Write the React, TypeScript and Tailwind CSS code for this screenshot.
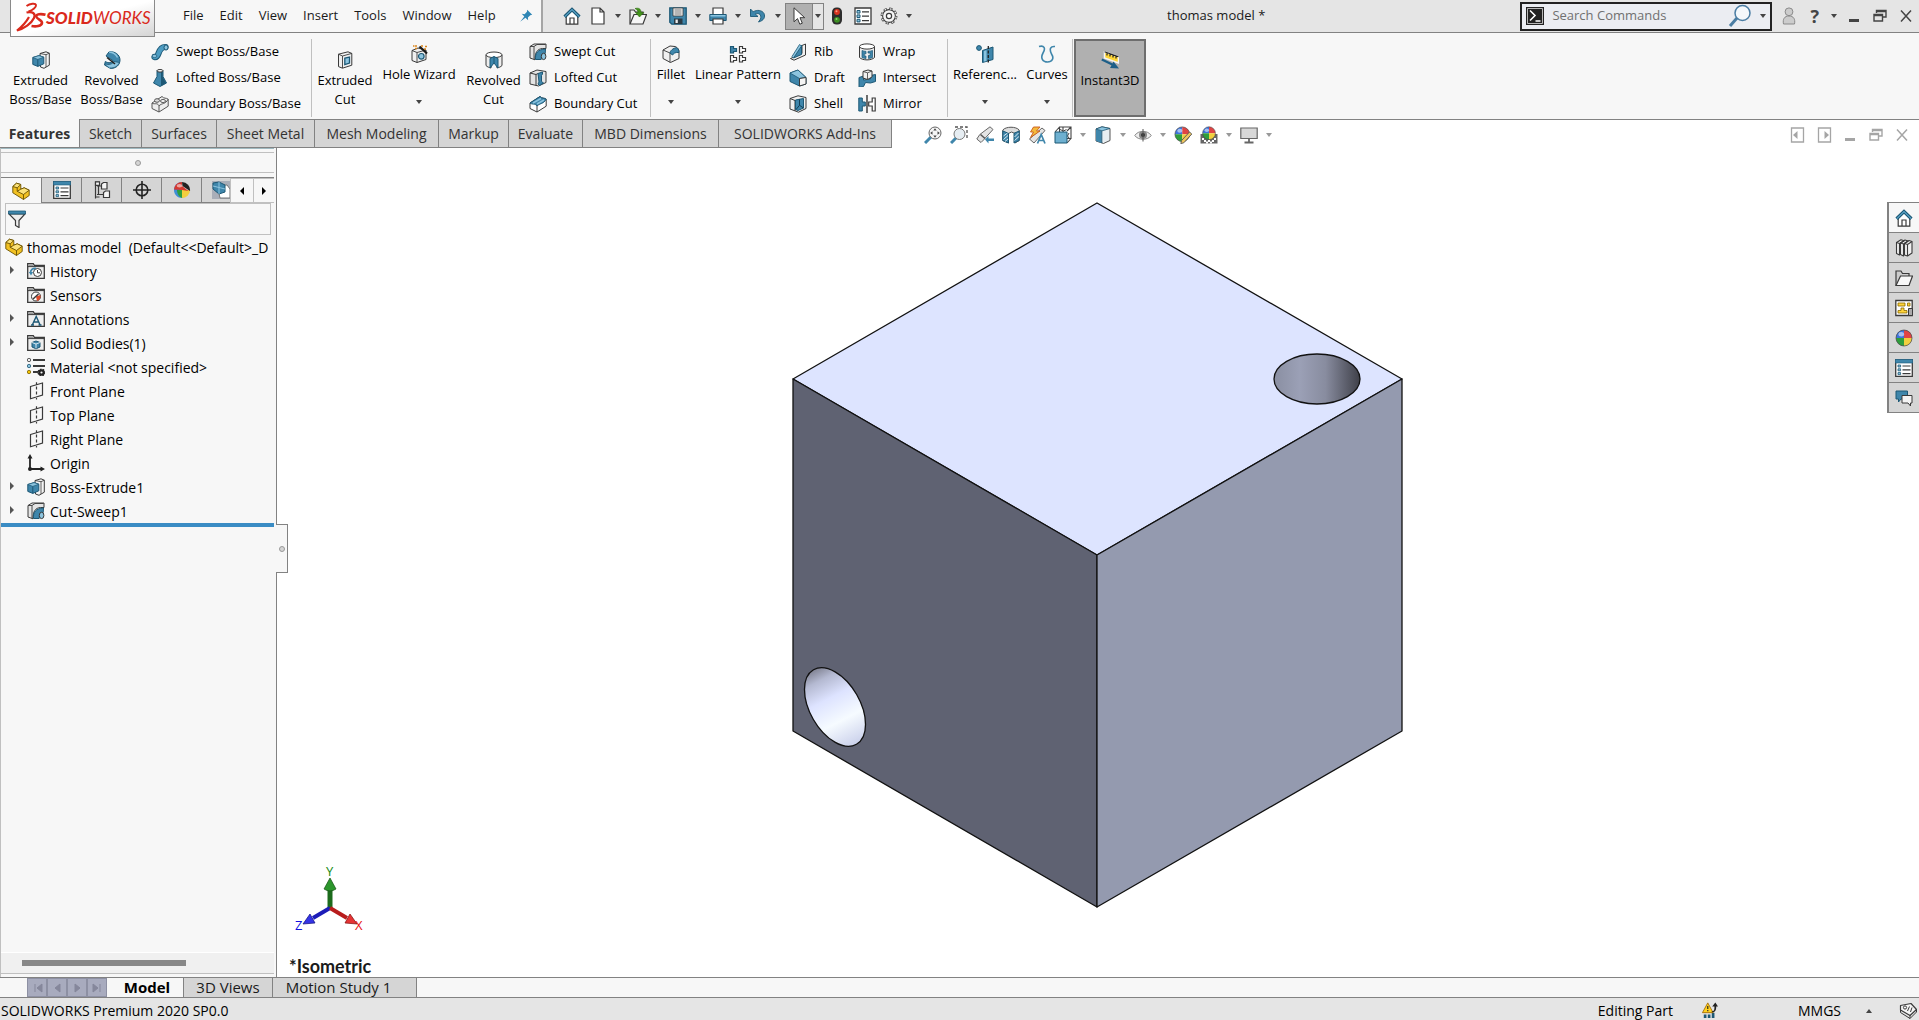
import { ReactNode, useState } from "react";

const K = "#3a3a3a";
const B = "#3f86ab";
const L = "#8cc4df";
const D = "#1d5875";
const G = "#e4e4e4";

const folder = (
  <>
    <path d="M.7 16.3V1.7h5.6l1.2 1.8h9.8v12.8z" fill="#eee" stroke={K} strokeWidth="1.3" />
    <path d="M.7 4.6h16.6" stroke={K} strokeWidth="1" />
    <path d="M1.4 2.4h4.4l1 1.6H1.4z" fill="#999" />
  </>
);

const plane = <path d="M3.5 4.5 15.5 1v12l-12 3.8zM9.5.2v2M9.5 4.5v3M9.5 9.5v3M9.5 14.5v3" fill="none" stroke={K} strokeWidth="1.2" />;

const extrude = (
  <>
    <path d="M8 2.5 14 .8l3.3 1.4v12L12 17.3 8.5 16z" fill="#f4f4f4" stroke={K} />
    <path d="M14 3.5v12.5M8 2.5l6 1.2 3.3-1.5" fill="none" stroke={K} strokeWidth=".8" />
    <path d="M.8 6.5 7 4.6l4.8 1.6v6.6l-6 2.6-5-2z" fill={B} stroke={D} />
    <path d="M.8 6.5 7 4.6l4.8 1.6-6 2.2z" fill={L} stroke={D} strokeWidth=".7" />
    <path d="M5.8 8.4v7" stroke={D} />
  </>
);

const sweptCut = (
  <>
    <path d="M1 3.5 5 1h12v4.5h-3.6C8.5 6 6 9 6 16.8L1 15z" fill={G} stroke={K} />
    <path d="M1 3.5h4v12.7M5 3.5 8 1.5h8.5" fill="none" stroke={K} strokeWidth=".9" />
    <path d="M6.5 16.5C6 10 8.5 6.5 16.5 6l-.3 4.6c-3 .3-4 2.4-4 5.9z" fill={B} stroke={D} />
    <ellipse cx="14.6" cy="13.4" rx="2.3" ry="3.2" fill={L} stroke={K} />
  </>
);

const ball = (
  <>
    <path d="M9 9V1a8 8 0 0 0-8 8z" fill="#3d74dd" />
    <path d="M9 9h8a8 8 0 0 0-8-8z" fill="#e04444" />
    <path d="M9 9H1a8 8 0 0 0 8 8z" fill="#2f9e3c" />
    <path d="M9 9v8a8 8 0 0 0 8-8z" fill="#f2cf3e" />
    <ellipse cx="6.3" cy="5.2" rx="2.8" ry="2.2" fill="#fff" opacity=".55" />
    <circle cx="9" cy="9" r="8" fill="none" stroke="#444" strokeWidth=".7" />
  </>
);

// yellow step-shaped block
const part = (
  <g stroke="#6b5200" strokeWidth=".9" strokeLinejoin="round">
    <path d="M.8 4.500 4.500 1.200 8.800 2.500v4.700l3.400-1.400 5 2.400v5.300l-5.700 4L.8 10.800z" fill="#f2c122" />
    <path d="M.8 4.500 4.500 1.200 8.800 2.500 5.200 5.800zM5.200 9.300l3.600-2.100 3.400-1.400 5 2.400-5.700 4.300z" fill="#fbe27a" />
    <path d="M5.200 5.800v3.500M11.500 12.500v5" fill="none" />
  </g>
);

const house = (
  <>
    <path d="M3.2 8.5v8.700h11.600V8.500L9 3z" fill="#fff" stroke={K} strokeWidth="1.2" />
    <path d="M7 17v-6h4v6" fill="none" stroke={K} strokeWidth="1.2" />
    <path d="M1.6 9.800 9 2.600l7.400 7.200" fill="none" stroke={D} strokeWidth="3.4" />
    <path d="M1.800 9.600 9 2.600l7.200 7" fill="none" stroke="#5aa5c9" strokeWidth="1.2" />
  </>
);

const list = (
  <>
    <path d="M1 1h16v16H1z" fill="#fff" stroke={K} strokeWidth="1.3" />
    <path d="M3 3.500h3v2.600H3zM3 7.900h3v2.600H3zM3 12.300h3v2.600H3z" fill={L} stroke={D} />
    <path d="M8 4.800h7M8 9.200h7M8 13.600h7" stroke={K} strokeWidth="1.2" />
  </>
);

const properties = (
  <>
    <path d="M.7.700h16.600v16.600H.7z" fill="#fff" stroke={K} strokeWidth="1.3" />
    <path d="M.2.200h17.600v3.800H.2z" fill={B} stroke={D} strokeWidth=".6" />
    <path d="M3 6h2.600v2H3zM3 9.800h2.600v2H3zM3 13.600h2.600v2H3z" fill={L} stroke={D} strokeWidth=".8" />
    <path d="M7.500 7h8M7.500 10.800h8M7.500 14.600h8" stroke={K} strokeWidth="1.2" />
  </>
);

const restore = <path d="M5.500 6V3.500H15V10h-3M3 7.500h8.500V14H3zM3 8.500h8.500M5.500 4.500H15" fill="none" stroke="currentColor" strokeWidth="1.4" />;

const icons: Record<string, ReactNode> = {
  home: house,
  newDoc: <path d="M3 1h8l4 4v12H3zM11 1v4h4" fill="#fff" stroke={K} strokeWidth="1.2" />,
  open: (
    <>
      <path d="M1 16.500V3h4l1.500 2H14v3" fill="#eee" stroke={K} strokeWidth="1.2" />
      <path d="m1 17 4-9.500h12.500L14 17z" fill="#f6f6f6" stroke={K} strokeWidth="1.2" />
      <path d="M6 1.500c4-1 6 .5 6 4h2.700L10.500 10 6.500 5.500H9c0-2-1-3-3-4z" fill="#43941b" stroke="#2a6a0c" strokeWidth=".6" />
    </>
  ),
  save: (
    <>
      <path d="M.8.800h16.400v16.400H2.800l-2-2z" fill={B} stroke={D} strokeWidth="1.3" />
      <path d="M4 1h10v8H4z" fill="#f4f4f4" stroke={K} strokeWidth=".8" />
      <path d="M5.500 3h7M5.500 5h7M5.500 7h7" stroke="#777" />
      <path d="M5 11.500h8.500V17H5z" fill="#2b3b45" />
      <path d="M6.500 12.500h2.300V16H6.500z" fill="#eee" />
    </>
  ),
  print: (
    <>
      <path d="M4 8V1h10v7" fill="#fff" stroke={K} strokeWidth="1.2" />
      <path d="M.8 7.500h16.400v6H.8z" fill={B} stroke={D} />
      <path d="M1.500 8h15v1.500h-15z" fill={L} />
      <path d="M4 12h10v5H4z" fill="#fff" stroke={K} strokeWidth="1.2" />
    </>
  ),
  undo: <path d="M1.500 2v7.500H9L6.300 7c3.500-1.500 6.500.5 5.200 5L9.500 15c5.500-1.500 7-5 5.500-8.500C13 3 8 2.500 4.200 4.800z" fill={B} stroke={D} strokeWidth=".9" />,
  cursor: <path d="M4 .8v14l3.500-3.200 2.300 5.600 2.500-1-2.300-5.500h4.700z" fill="#fff" stroke={K} />,
  traffic: (
    <>
      <rect x="4" y=".5" width="10" height="17" rx="4.5" fill="#2d2d2d" />
      <circle cx="9" cy="5" r="2.9" fill="#d8331f" />
      <circle cx="9" cy="12.8" r="2.9" fill="#3d8f23" />
      <circle cx="8.5" cy="4.3" r="1" fill="#ff9c86" />
      <circle cx="8.5" cy="12" r="1" fill="#8fd870" />
    </>
  ),
  list,
  gear: (
    <>
      <circle cx="9" cy="9" r="7.2" fill="none" stroke={K} strokeWidth="2.4" strokeDasharray="3.2 2.455" />
      <circle cx="9" cy="9" r="6.4" fill="#f4f4f4" stroke={K} strokeWidth="1.1" />
      <circle cx="9" cy="9" r="7.2" fill="none" stroke="#f4f4f4" strokeWidth="1.2" strokeDasharray="1.800 3.855" strokeDashoffset="-.7" />
      <circle cx="9" cy="9" r="2.6" fill="#fff" stroke={K} strokeWidth="1.2" />
    </>
  ),
  pin: <path d="m10.500 1 6.500 6.500-2.500.4-3 3 .2 3.600-3.400-3.100L1.500 16.500l5.300-6.800L3.500 6.200l3.700.4 3-3z" fill="#2f86b5" />,
  terminal: (
    <>
      <path d="M0 0h18v18H0z" fill="#222" />
      <path d="M1.500 1.500h15v15h-15z" fill="none" stroke="#ddd" strokeWidth=".8" />
      <path d="m4 3.500 5 5-5 5M9.500 14h5" fill="none" stroke="#fff" strokeWidth="1.6" />
    </>
  ),
  user: (
    <g fill="#ccc" stroke="#8a8a8a">
      <path d="M3.500 17c-1-5 1-8 5.500-8s6.500 3 5.500 8z" />
      <circle cx="9" cy="4.8" r="3.9" />
    </g>
  ),
  minimize: <path d="M4 12h10v3H4z" fill="currentColor" />,
  restore,
  close: <path d="m4 3.500 10 11M14 3.500l-10 11" stroke="currentColor" strokeWidth="1.5" />,
  paneLeft: (
    <>
      <path d="M2.500 2h12v14h-12z" fill="none" stroke="currentColor" strokeWidth="1.3" />
      <path d="M8.500 5v8L4 9z" fill="currentColor" />
    </>
  ),
  paneRight: (
    <>
      <path d="M3.500 2h12v14h-12z" fill="none" stroke="currentColor" strokeWidth="1.3" />
      <path d="M9.500 5v8L14 9z" fill="currentColor" />
    </>
  ),
  extrude,
  revolve: (
    <>
      <path d="M6 .8c6-.8 11 3 11 8.200s-4.500 9-10 8.200L1.500 14l.8-3.500c3.500 2 6.500 1.500 7.500-1L3 5z" fill={B} stroke={D} />
      <path d="M6 1c4 .2 7 2 8.500 5.500" stroke={L} strokeWidth="1.5" fill="none" />
      <path d="M7 17c4.500.3 8-2 9.500-5.500L11 10.500c-2 3-5 3.500-9 2.500" fill={L} stroke={D} strokeWidth=".8" />
      <path d="m4 6.500 8 6.500" stroke="#222" strokeWidth="1.6" />
    </>
  ),
  swept: (
    <>
      <path d="M3.500 14C9 15.500 6 3.500 14.500 4" fill="none" stroke={D} strokeWidth="6.2" strokeLinecap="round" />
      <path d="M3.500 14C9 15.500 6 3.500 14.500 4" fill="none" stroke="#4d9cc2" strokeWidth="4.3" strokeLinecap="round" />
      <ellipse cx="15" cy="4.5" rx="2" ry="2.6" fill={L} stroke={D} />
      <ellipse cx="3.5" cy="13" rx="2.4" ry="1.6" fill={L} stroke={D} strokeWidth=".7" />
    </>
  ),
  loft: (
    <>
      <path d="M6 1.500h6v6l3.500 6.500L9 17.500 2.500 14 6 7.500z" fill={B} stroke={D} />
      <path d="M10 3h1.700v5l3.300 6-5 3z" fill={D} />
      <ellipse cx="9" cy="1.8" rx="3" ry="1.3" fill="#fff" stroke={K} />
    </>
  ),
  boundary: (
    <g stroke="#555" strokeWidth="1">
      <path d="M1 8 11 1.500c2 2.500 4 1 6.200 2.700v7L8 17 1 13.500z" fill="#eee" />
      <path d="M1 8c2.500 2 5-1 7 2.800V17M8 10.800c3-3 6-1 9.200-6.600" fill="none" />
      <ellipse cx="6" cy="5.5" rx="2.5" ry="1.8" fill="#ddd" />
      <ellipse cx="12" cy="6" rx="2.5" ry="1.5" fill="#fff" />
    </g>
  ),
  extrudeCut: (
    <>
      <path d="M2.500 3.200 12 .800l3.800 1.600v11.800L6.500 17.200l-4-1.600z" fill="#f0f0f0" stroke={K} />
      <path d="M2.500 3.200 6.500 5l9.300-2.600M6.500 5v12" fill="none" stroke={K} strokeWidth=".9" />
      <path d="M8.800 7.200 13.500 6v6l-4.700 1.600z" fill={L} stroke={D} strokeWidth="1.3" />
    </>
  ),
  hole: (
    <>
      <path d="M2 5.500 8 3l8 2v9.500L7 17.500l-5-2z" fill="#f0f0f0" stroke={K} />
      <path d="M2 5.500 7 7.500l9-2.500M7 7.500v10" fill="none" stroke={K} strokeWidth=".9" />
      <circle cx="11.3" cy="11.3" r="2.8" fill={L} stroke={D} strokeWidth="1.2" />
      <path d="m9.500 1.500 7.500 7" stroke="#1a1a1a" strokeWidth="2.2" />
      <path d="M3 1h1.500M6 0v2M12 0v2M15 1.500h2M5 3.500h2M14 4h2" stroke="#d9861f" strokeWidth="1.5" />
    </>
  ),
  revolveCut: (
    <>
      <path d="M1 4v10.500c1.500 1.500 3 2 5 2.500V8l3-3 3 3v9c2-.5 3.500-1 5-2.500V4z" fill="#eee" stroke={K} />
      <ellipse cx="9" cy="3.8" rx="8" ry="2.8" fill="#fff" stroke={K} />
      <path d="m9 5.500-4 2V17l4-5 4 5V7.500z" fill={B} stroke={D} />
      <path d="M9 5.500V12" stroke={D} />
    </>
  ),
  sweptCut,
  loftCut: (
    <>
      <path d="M1 4 8 1l9 1.500v11L9.500 17 1 15z" fill={G} stroke={K} />
      <path d="M1 4l6 1.500V16.500M7 5.500 9 4.500" fill="none" stroke={K} />
      <path d="M9 4.500 13.500 3v2l-1 1.500v6l2 1.500-4 2.500L9 15l1-2z" fill={B} stroke={D} />
    </>
  ),
  boundaryCut: (
    <>
      <path d="M1 8 11 1.500c2 2.500 4 1 6.200 2.700v7L8 17 1 13.500z" fill="#fff" stroke={K} />
      <path d="M1 8 11 1.500c2 2.500 4 1 6.200 2.700C14 9.500 11 8 8 11 6 8 3.500 10 1 8z" fill={B} stroke={D} />
      <path d="m4 8 8-4.500M8 9l7-4" stroke={L} strokeWidth="1.5" />
      <path d="M8 11v6" stroke={K} />
    </>
  ),
  fillet: (
    <>
      <path d="M1 5 8 1l5 .5c3 1 4 3 4 6v6L8.500 17.500 1 13.500z" fill="#f0f0f0" stroke={K} />
      <path d="m1 5 7 3v9.500" fill="none" stroke={K} strokeWidth=".9" />
      <path d="M8 8c0-2 3-5 6.500-5.300 2 1 2.500 3 2.500 4.800C13 7 11.500 8.500 10.500 10z" fill={B} stroke={D} />
    </>
  ),
  linear: (
    <g fill="#fff" stroke={K} strokeWidth="1.2">
      <path d="M1.500 1.500h3v2h3v3h-3v1.500h-3z" fill={B} stroke={D} />
      <path d="M10.500 1.500h3v2h3v3h-3v1.500h-3z" />
      <path d="M1.500 10.500h3v2h3v3h-3V17h-3zM10.500 10.500h3v2h3v3h-3V17h-3z" />
    </g>
  ),
  rib: (
    <>
      <path d="M13 2.500 16.500 1v11L5 17.200 1.500 15.500 13 10.500z" fill="#f0f0f0" stroke={K} />
      <path d="M12.500 2v9.500L4.500 15z" fill={B} stroke={D} />
      <path d="M10.500 1.500 3 13.500l1.500 1.500 8-12z" fill={L} stroke={D} strokeWidth=".8" />
    </>
  ),
  draft: (
    <>
      <path d="M1 4 9 1l8 7.500v6.500L10.500 17 1 12.500z" fill={B} stroke={D} />
      <path d="m1 4 9.500 5.500L17 8.500 9 1z" fill={L} stroke={D} strokeWidth=".8" />
      <path d="m10.500 9.500 6.500-1v6.500l-6.500 2z" fill="#f4f4f4" stroke={K} />
    </>
  ),
  shell: (
    <>
      <path d="M1 3.500 9 .8l8 1.700v11L9.500 17.200 1 14z" fill="#f0f0f0" stroke={K} />
      <path d="m1 3.500 5 2V16" fill="none" stroke={K} />
      <path d="M6.500 5 14.500 3.500v9.500L9 15.500l-2.500-1z" fill={B} stroke={D} />
      <path d="M10.500 4.300v6l4 2.700M10.500 10.300 7 14.500" fill="none" stroke="#123f56" />
    </>
  ),
  wrap: (
    <>
      <path d="M1.500 3.500v11c3 3.200 12 3.200 15 0v-11z" fill="#eee" stroke={K} />
      <ellipse cx="9" cy="3.5" rx="7.5" ry="2.6" fill="#fff" stroke={K} />
      <path d="M4 7.500c1.500.6 2.500.8 4 .9v2.400H6.300V13H8v2.500c-1.500 0-3-.3-4-.9zM10 8.400c1.500-.1 3-.3 4.500-.9v7.100c-1.500.6-2.500.8-4 .9v-3h1.700V10H10z" fill={B} stroke={D} strokeWidth=".7" />
    </>
  ),
  intersect: (
    <>
      <path d="M1 8.500 5.500 7v4l7-1V6.500l5-1v7l-5 1.500-5-.5-2 4-4.500 1z" fill={B} stroke={D} />
      <path d="m5 2.500 5-1.500 4 1v6L9.500 10.500 5 9z" fill="#f0f0f0" stroke={K} />
      <path d="m5 2.500 4.500 1.300L14 2M9.500 3.800v6.500" fill="none" stroke={K} strokeWidth=".8" />
    </>
  ),
  mirror: (
    <>
      <path d="M.8 3h3.500v4h3v4h-3v5H.8z" fill={B} stroke={D} />
      <path d="M17.200 3h-3v4h-3.500v4h3.500v5h3z" fill="#fff" stroke={K} strokeWidth="1.2" />
      <path d="M9 0v18" stroke="#222" strokeWidth="1.3" />
    </>
  ),
  reference: (
    <>
      <path d="M6.500 5.500 17 2v12.500L6.500 17.500z" fill={B} stroke={D} />
      <path d="m8 6 2.500-.8V16L8 16.500z" fill={L} />
      <path d="M12.300 1v17" stroke="#222" strokeDasharray="3 1.5" strokeWidth="1.3" />
      <circle cx="3" cy="3" r="2.4" fill={B} stroke={D} />
    </>
  ),
  curves: <path d="M1 1.500c5-1.500 7 1.500 4 6.500C2 13.500 5 17 9.500 17s7-3.500 4-8C11 4 12.500 1 17 1.500" fill="none" stroke={B} strokeWidth="1.6" />,
  instant: (
    <>
      <path d="m3.500.8 14 5V12l-14-5z" fill="#ffd637" stroke="#f5f5f5" strokeWidth="1.5" />
      <path d="m3.500.8 14 5M6 2v2.500M9 3v2.500M12 4v2.500M15 5v2.500" stroke="#222" fill="none" strokeWidth="1.2" />
      <path d="m.8 8.500 10.500 5" stroke="#1d5f88" strokeWidth="2.2" />
      <path d="m12.500 10.500 5.500 7-9-.5z" fill="#1d5f88" />
    </>
  ),
  zoomFit: (
    <>
      <path d="m1 17 6-6" stroke={B} strokeWidth="3" />
      <circle cx="11" cy="7" r="6" fill="#f6f6f6" stroke="#666" />
      <path d="M11 2.200 9.300 4.500h3.400zM11 11.800 9.300 9.500h3.400zM6.200 7l2.300-1.700v3.400zM15.800 7l-2.300-1.700v3.400z" fill="#444" />
    </>
  ),
  zoomArea: (
    <>
      <path d="M5 1h12v13" fill="none" stroke="#555" strokeWidth="1.3" strokeDasharray="3 2" />
      <path d="m1 17 5-5" stroke={B} strokeWidth="3" />
      <circle cx="9.5" cy="8" r="5.5" fill="#e6edf2" stroke="#777" />
    </>
  ),
  prevView: (
    <>
      <path d="M14 .8 17 3.500 7.500 14 5 16.500.8 13l3-4.500z" fill={G} stroke="#666" />
      <path d="m4.500 8.500 4.500 4" stroke="#555" strokeWidth="1.5" />
      <path d="M9 13.500 12.500 10v2.500H18v2.500h-5.500v2.500z" fill={B} />
    </>
  ),
  section: (
    <>
      <path d="M.8 4C4 .3 14 .3 17.200 4v10.500L13 17V7.500L9.500 6 6.500 7.500V17L.8 14.500z" fill="#ddd" stroke="#555" />
      <path d="m.8 5 5.700 2.300V17L.8 14.500zM12 7.300 17.200 5v9.500L12 17z" fill={B} stroke={D} />
      <path d="m1.500 10 4-3M1.500 13.500l4.500-4M3 15.500l3-2.500M12.500 11l4-4M12.500 14.500l4.500-4" stroke="#fff" strokeWidth=".8" />
    </>
  ),
  dynamicView: (
    <>
      <path d="m14 2 3 2.500L6 17l-4.500-4z" fill={G} stroke="#666" />
      <path d="M5.500 1H12L8.500 5H12L2.500 11.500l3-5.500H2.500z" fill="#f4ba3c" stroke="#c7591c" strokeWidth=".9" />
      <path d="m9.500 17.500 3.700-9 3.800 9M11 14.500h4.500" fill="none" stroke={B} strokeWidth="1.7" />
    </>
  ),
  viewOrient: (
    <>
      <path d="M5.500 6V1H17v11.500h-4M9 6V1M13 5l4-4M13 17l4-4.500M1 6l4.500-5" fill="none" stroke="#444" strokeWidth="1.1" />
      <path d="M12.500 3.500 9.500 5 6 3.500M15 7l-1.500 3 1.500 2" fill="none" stroke="#444" />
      <path d="M1 6h12v11H1z" fill="#6eb0d0" stroke={D} />
    </>
  ),
  display: (
    <>
      <path d="M2 3 8 .8 16 2.500v12L9.500 17.500 2 15z" fill="#e8eef1" stroke="#555" />
      <path d="m2 3 5.500 1.700v12.200L2 15z" fill={B} />
      <path d="m2 3 6-2.200 8 1.700-8 2.300z" fill={L} stroke={D} strokeWidth=".8" />
      <path d="M7.800 5v12" stroke={D} />
    </>
  ),
  eye: (
    <>
      <path d="M.8 9.500C4 4 14 4 17.200 9.500 14 14.500 4 14.500.8 9.500z" fill="#eee" stroke="#888" />
      <circle cx="9" cy="9" r="4" fill="#8a8a8a" />
      <circle cx="9" cy="9" r="2" fill="#333" />
      <path d="M9 3v12.500" stroke="#555" />
    </>
  ),
  appearance: (
    <>
      <g transform="scale(.92)">{ball}</g>
      <path d="m15.500 6 2.300 2-8 8.800-3 .8.700-3z" fill="#f0c65d" stroke="#555" strokeWidth=".9" />
    </>
  ),
  scene: (
    <>
      <path d="M.5 8h17v9.500H.5z" fill="#666" />
      <path d="M2 12h2v2H2zM4 14h2v2H4zM8 14h2v2H8zM12 14h2v2h-2zM14 12h2v2h-2zM6 15.500h2v2H6zM10 15.500h2v2h-2z" fill="#fff" />
      <g transform="translate(1.800) scale(.8)">{ball}</g>
    </>
  ),
  monitor: (
    <>
      <path d="M.8 2h16.400v10.500H.8z" fill="#d8d8d8" stroke="#666" strokeWidth="1.2" />
      <path d="M9 12.500v3.500M4.500 16.500h9" stroke="#666" strokeWidth="1.8" />
    </>
  ),
  part,
  properties,
  config: (
    <>
      <path d="M2.500.5v17M2.500 1h4M2.500 16h4M4 5h5" stroke={K} strokeWidth="1.2" />
      <path d="M2.500.8h4v3.500h-4zM8.500 3l2-1.500H14V8H8.500zM10.500 11.500l2-1.500H16.500v6.500h-6z" fill="#f6f6f6" stroke={K} strokeWidth="1.2" />
      <path d="M4 13.500h6M5.500 5v8" stroke={K} strokeWidth="1.2" />
    </>
  ),
  target: (
    <g fill="none" stroke="#222" strokeWidth="1.6">
      <circle cx="9" cy="9" r="5.8" />
      <path d="M9 0v18M0 9h18" />
    </g>
  ),
  ball,
  ballDark: (
    <>
      <path d="M9 9V1a8 8 0 0 0-8 8z" fill="#3d74dd" />
      <path d="M9 1v8L1 8.500C1.500 4 5 1 9 1z" fill="#d63a2f" />
      <path d="M1 9h8v8C4.500 17 1 13.500 1 9z" fill="#3f8fd6" />
      <path d="M4 9h7l-1 8C6.500 17 4 13 4 9z" fill="#2f9e3c" />
      <path d="M9 9h8a8 8 0 0 1-8 8z" fill="#f2cf3e" />
      <path d="M9 1a8 8 0 0 1 8 9L9.500 5z" fill="#222" />
      <path d="M9 9V5l6.500 5z" fill="#d63a2f" />
      <ellipse cx="6.5" cy="4.8" rx="2.8" ry="1.8" fill="#fff" opacity=".55" />
    </>
  ),
  cam: (
    <>
      <path d="M0 0h18v18H0z" fill="#a9aeb8" />
      <path d="M5 4h10l3 4v9H8z" fill="#fff" stroke="#777" />
      <path d="M1 2 7 1l6 3v7l-6 2-6-5z" fill={B} stroke={D} />
      <path d="M7 1v12M1 5l12 3" stroke={L} />
    </>
  ),
  filter: (
    <>
      <path d="M1 4h16l-6 6.500V17.500L7.500 15.500v-5z" fill="#eee" stroke={K} strokeWidth="1.2" />
      <path d="M.5 1h17v3H.5z" fill={B} stroke={D} strokeWidth=".8" />
    </>
  ),
  history: (
    <>
      {folder}
      <circle cx="10.5" cy="10.5" r="4" fill="#fff" stroke={K} />
      <path d="M10.500 8v2.800h2.500" fill="none" stroke={K} />
      <path d="M3.500 11c0-3 2-5 5.500-4.500" fill="none" stroke={B} strokeWidth="1.7" />
      <path d="M1.800 10h4.400L4 13.500z" fill={B} />
    </>
  ),
  sensors: (
    <>
      {folder}
      <circle cx="9" cy="10.5" r="4.5" fill="#fff" stroke={K} />
      <path d="M9 10.500 13.300 9a4.500 4.500 0 0 1-3.300 6z" fill="#dd4a2a" />
      <path d="m6 13 5.500-5" stroke={K} strokeWidth="1.5" />
    </>
  ),
  annotations: (
    <>
      {folder}
      <path d="m5.300 15 3.900-8.500 3.900 8.500M7 12h4.500M4 15h3M11.500 15h3" fill="none" stroke={D} strokeWidth="1.4" />
    </>
  ),
  bodies: (
    <>
      {folder}
      <path d="M5 8.500 9 7l4 1.500V13l-4 1.800L5 13z" fill={B} stroke={D} />
      <path d="M5 8.500 9 10l4-1.500M9 10v4.500" fill="none" stroke="#fff" strokeWidth=".8" />
    </>
  ),
  material: (
    <>
      <path d="M6 2h12M6 8h12M6 14h5" stroke={K} strokeWidth="1.8" />
      <circle cx="2" cy="2" r="1.7" fill="#eee" stroke={K} strokeWidth=".8" />
      <circle cx="2" cy="8" r="1.7" fill={L} stroke={D} strokeWidth=".8" />
      <circle cx="2" cy="14" r="1.7" fill="#f5c400" stroke="#7a6000" strokeWidth=".8" />
      <circle cx="14.5" cy="14.5" r="2.2" fill="none" stroke="#222" strokeWidth="2.2" />
      <circle cx="14.5" cy="14.5" r="3.4" fill="none" stroke="#222" strokeWidth="1.2" strokeDasharray="1.6 1.2" />
    </>
  ),
  plane,
  origin: (
    <>
      <path d="M3 3v12h11" fill="none" stroke="#222" strokeWidth="1.8" />
      <path d="M3 0 .5 4.500h5zM18 15l-4.500-2.500v5z" fill="#222" />
      <circle cx="3" cy="15" r="2" fill="#222" />
    </>
  ),
  books: (
    <g fill="#f0f0f0" stroke={K} strokeWidth="1.1" strokeLinejoin="round">
      <path d="M9.500 4.500 14 1.500l3 1V14l-4.500 3-3-1z" />
      <path d="m9.500 4.500 3 1 4.500-3M12.500 5.500V17" fill="none" />
      <path d="m5.500 4 4.500-3 3 1-3.500 2.500L8.500 17l-3-1.500z" />
      <path d="m5.500 4 3 1 4.500-3M8.500 5v12" fill="none" />
      <path d="M1.500 3.500 6 .8l3 1L5.500 4 4.500 16l-3-1.500z" />
      <path d="m1.500 3.500 3 1 4.500-2.700M4.500 4.500V16" fill="none" />
    </g>
  ),
  folder: (
    <>
      <path d="M1 16.500V2h5l1.500 2.500H14V7" fill="#ccc" stroke={K} strokeWidth="1.2" />
      <path d="M1 16.500 5.500 7H17.500L14 16.500z" fill="#f8f8f8" stroke={K} strokeWidth="1.2" />
    </>
  ),
  palette: (
    <>
      <path d="M.8 1.500h16.400v15H.8z" fill="#fff" stroke={K} strokeWidth="1.3" />
      <path d="M3 4h7v3H3zM12.500 4H15v3h-2.500zM6 9h3v2.500h3V14H3v-2.500h3z" fill="#ffd43a" stroke="#8a6a00" strokeWidth=".8" />
      <path d="M13.500 9.500h4v7h-4z" fill="#aaa" stroke={K} />
    </>
  ),
  chat: (
    <>
      <path d="M1 2h11.500v8H6l-2.500 3v-3H1z" fill={B} stroke={D} />
      <path d="M7 6.500h10v7.500h-1.500v3L13 14H7z" fill="#f4f4f4" stroke={K} />
    </>
  ),
  rebuild: (
    <>
      <path d="M2 14h3v4H2zM6.500 14h3v4h-3zM11 12h3v6h-3z" fill={D} />
      <path d="m6.500 1 6 11H.5z" fill="#ffd21f" stroke="#a46a00" />
      <path d="M6.500 4.500v3.500M6.500 9v1.500" stroke="#222" strokeWidth="1.3" />
      <path d="M11 10.500c3 0 3-2.500 3-5.500h-2.500L15 .5 18 5h-2c0 4-1 6.500-5 6.500z" fill="#222" />
    </>
  ),
  tag: (
    <>
      <path d="M1.500 3.500 12 1.500l5.500 6-6.500 6L1.500 8z" fill="#f4f4f4" stroke={K} strokeWidth="1.2" strokeLinejoin="round" />
      <path d="M1.500 8v2.500L11 16.500l6.500-6.500V7.500M11 13.500v3" fill="none" stroke={K} />
      <circle cx="6" cy="5.5" r="1.6" fill="none" stroke={K} />
      <path d="m8.500 9 2-4.500M11.500 10l1.500-4.500" stroke={K} />
    </>
  ),
};

function Icon({ name, className = "h-[18px] w-[18px]" }: { name: string; className?: string }) {
  return (
    <svg viewBox="0 0 18 18" className={`shrink-0 ${className}`} aria-hidden="true">
      {icons[name]}
    </svg>
  );
}

function Caret({ className = "text-[#444]" }: { className?: string }) {
  return (
    <svg viewBox="0 0 6 4" className={`h-1 w-1.5 shrink-0 ${className}`} aria-hidden="true">
      <path d="M0 0h6L3 4z" fill="currentColor" />
    </svg>
  );
}

function Logo() {
  return (
    <div className="relative z-10 ml-2.5 flex h-[37px] w-[145px] shrink-0 items-center self-start border border-t-0 border-[#8a8a8a] bg-linear-to-br from-white from-50% to-[#d5d5d5] pl-[5px] text-[#da291c]">
      <svg viewBox="0 0 30 32" className="h-8 w-[30px] shrink-0" fill="none" stroke="currentColor" aria-hidden="true">
        <path d="M10.500 4C14 1.500 19.500.8 20 3c.3 2-3 5-7.500 6.500" strokeWidth="2" />
        <path d="M10.500 10.500c6-1.500 9.500 1 7.500 5.500C15.500 21.500 8 26.500 1 28.500c4.500-3.500 9-8 12-13.500" strokeWidth="2.2" />
        <path d="M29.500 12.800c-4.500-1.300-9.500-.8-9.300 1.700.2 2.500 6.300 3.500 5.800 6.500-.5 3.200-6 3.800-10.500 3" strokeWidth="2.600" />
      </svg>
      <span className="font-[Lato] text-[17px] leading-5 italic">
        <b className="font-black">SOLID</b>WORKS
      </span>
    </div>
  );
}

const menus = ["File", "Edit", "View", "Insert", "Tools", "Window", "Help"];

function TitleBar() {
  return (
    <header className="flex h-[33px] shrink-0 items-center border-b border-[#828282] bg-[#e5e5e5] text-[13px] text-[#1a1a1a]">
      <Logo />
      <nav className="flex h-full w-[388px] items-center gap-4 border-r-2 border-[#a5a5a5] bg-[#f7f7f7] pr-2 pl-7">
        {menus.map((menu) => (
          <button key={menu}>{menu}</button>
        ))}
        <button aria-label="Pin menu" className="ml-auto">
          <Icon name="pin" className="h-3.5 w-3.5" />
        </button>
      </nav>
      <div className="ml-5 flex items-center gap-2">
        <button aria-label="Home"><Icon name="home" /></button>
        {["newDoc", "open", "save", "print", "undo"].map((name) => (
          <button key={name} aria-label={name} className="flex items-center gap-2">
            <Icon name={name} />
            <Caret />
          </button>
        ))}
        <button aria-label="Select" className="-mx-1 flex h-[27px] items-center border border-[#828282]">
          <span className="flex h-full w-[27px] items-center justify-center border-r border-[#828282] bg-[#b0b0b0]">
            <Icon name="cursor" />
          </span>
          <span className="flex w-2.5 justify-center"><Caret /></span>
        </button>
        <button aria-label="Rebuild"><Icon name="traffic" /></button>
        <button aria-label="File properties"><Icon name="list" /></button>
        <button aria-label="Options" className="flex items-center gap-2">
          <Icon name="gear" />
          <Caret />
        </button>
      </div>
      <h1 className="flex-1 text-center">thomas model *</h1>
      <div className="flex h-[29px] w-[252px] items-center border-2 border-[#222] bg-[#ebedf2] px-1">
        <Icon name="terminal" />
        <input aria-label="Search Commands" placeholder="Search Commands" className="ml-2 w-0 flex-1 bg-transparent outline-none placeholder:text-[#707070]" />
        <svg viewBox="0 0 24 24" className="h-6 w-6" fill="none" aria-hidden="true">
          <path d="m2 22 7-8" stroke="#4a7da3" strokeWidth="3" />
          <circle cx="14.5" cy="9" r="7.5" fill="#f4f8fb" stroke="#4a7da3" strokeWidth="1.5" />
        </svg>
        <span className="ml-2"><Caret /></span>
      </div>
      <div className="flex items-center pr-1 pl-2 text-[#444]">
        <button aria-label="Account"><Icon name="user" /></button>
        <button aria-label="Help" className="ml-3 flex items-center gap-3 text-lg leading-5 font-bold">? <Caret /></button>
        <button aria-label="Minimize" className="ml-2"><Icon name="minimize" /></button>
        <button aria-label="Restore" className="ml-2"><Icon name="restore" /></button>
        <button aria-label="Close" className="ml-2"><Icon name="close" /></button>
      </div>
    </header>
  );
}

type BigButtonProps = { icon: string; label: string; width: string; menu?: boolean };

function BigButton({ icon, label, width, menu }: BigButtonProps) {
  return (
    <button className={`flex flex-col items-center leading-[19px] ${menu ? "pt-1.5" : "pt-3"} ${width}`}>
      <Icon name={icon} />
      <span className="mt-0.5 whitespace-pre-line">{label}</span>
      {menu && <span className="mt-4"><Caret /></span>}
    </button>
  );
}

function ButtonList({ items, className }: { items: [string, string][]; className: string }) {
  return (
    <div className={`flex flex-col ${className}`}>
      {items.map(([icon, label]) => (
        <button key={label} className="flex h-[26px] items-center gap-[7px] whitespace-nowrap">
          <Icon name={icon} />
          {label}
        </button>
      ))}
    </div>
  );
}

const Divider = () => <div className="h-[78px] w-px shrink-0 bg-[#c0c0c0]" />;

function Ribbon() {
  return (
    <section className="flex h-[86px] shrink-0 items-start bg-[#f7f7f7] pt-1.5 pl-[5px] text-[13px] text-black">
      <BigButton icon="extrude" label={"Extruded\nBoss/Base"} width="w-[71px]" />
      <BigButton icon="revolve" label={"Revolved\nBoss/Base"} width="w-[71px]" />
      <ButtonList className="w-[164px] pl-1" items={[["swept", "Swept Boss/Base"], ["loft", "Lofted Boss/Base"], ["boundary", "Boundary Boss/Base"]]} />
      <Divider />
      <BigButton icon="extrudeCut" label={"Extruded\nCut"} width="w-[66px]" />
      <BigButton icon="hole" label="Hole Wizard" width="w-[82px]" menu />
      <BigButton icon="revolveCut" label={"Revolved\nCut"} width="w-[67px]" />
      <ButtonList className="w-[123px] pl-0.5" items={[["sweptCut", "Swept Cut"], ["loftCut", "Lofted Cut"], ["boundaryCut", "Boundary Cut"]]} />
      <Divider />
      <BigButton icon="fillet" label="Fillet" width="w-10" menu />
      <BigButton icon="linear" label="Linear Pattern" width="w-[94px]" menu />
      <ButtonList className="w-[69px] pl-1" items={[["rib", "Rib"], ["draft", "Draft"], ["shell", "Shell"]]} />
      <ButtonList className="w-[93px] pl-1" items={[["wrap", "Wrap"], ["intersect", "Intersect"], ["mirror", "Mirror"]]} />
      <Divider />
      <BigButton icon="reference" label="Referenc..." width="w-[74px]" menu />
      <BigButton icon="curves" label="Curves" width="w-[50px]" menu />
      <Divider />
      <button className="ml-px flex h-[78px] w-[72px] flex-col items-center border-2 border-[#6e6e6e] bg-[#b0b0b0] pt-2.5 leading-[19px]">
        <Icon name="instant" />
        <span className="mt-0.5">Instant3D</span>
      </button>
    </section>
  );
}

const ribbonTabs: [string, string][] = [
  ["Sketch", "w-[62px]"],
  ["Surfaces", "w-[75px]"],
  ["Sheet Metal", "w-[98px]"],
  ["Mesh Modeling", "w-[124px]"],
  ["Markup", "w-[70px]"],
  ["Evaluate", "w-[74px]"],
  ["MBD Dimensions", "w-[136px]"],
  ["SOLIDWORKS Add-Ins", "w-[174px] border-r"],
];

const viewTools: [string, boolean][] = [
  ["zoomFit", false],
  ["zoomArea", false],
  ["prevView", false],
  ["section", false],
  ["dynamicView", false],
  ["viewOrient", true],
  ["display", true],
  ["eye", true],
  ["appearance", false],
  ["scene", true],
  ["monitor", true],
];

function TabRow() {
  return (
    <div className="flex h-[29px] shrink-0 bg-white text-[#333]">
      <button className="w-[79px] border-b border-[#828282] bg-[#f7f7f7] font-bold">Features</button>
      {ribbonTabs.map(([label, width]) => (
        <button key={label} className={`border-y border-l border-[#828282] bg-[#d5d5d5] whitespace-nowrap ${width}`}>
          {label}
        </button>
      ))}
      <div className="flex flex-1 items-center border-t border-[#828282] pt-0.5 pr-2 pl-8">
        <div className="flex items-center gap-2">
          {viewTools.map(([name, menu]) => (
            <button key={name} aria-label={name} className="flex items-center gap-2">
              <Icon name={name} />
              {menu && <Caret className="text-[#999]" />}
            </button>
          ))}
        </div>
        <div className="ml-auto flex gap-2 text-[#a5a5a5]">
          {["paneLeft", "paneRight", "minimize", "restore", "close"].map((name) => (
            <button key={name} aria-label={name}><Icon name={name} /></button>
          ))}
        </div>
      </div>
    </div>
  );
}

const tree: { icon: string; label: string; open?: boolean }[] = [
  { icon: "history", label: "History", open: true },
  { icon: "sensors", label: "Sensors" },
  { icon: "annotations", label: "Annotations", open: true },
  { icon: "bodies", label: "Solid Bodies(1)", open: true },
  { icon: "material", label: "Material <not specified>" },
  { icon: "plane", label: "Front Plane" },
  { icon: "plane", label: "Top Plane" },
  { icon: "plane", label: "Right Plane" },
  { icon: "origin", label: "Origin" },
  { icon: "extrude", label: "Boss-Extrude1", open: true },
  { icon: "sweptCut", label: "Cut-Sweep1", open: true },
];

function FeaturePanel() {
  const [filter, setFilter] = useState("");
  return (
    <aside className="relative z-10 flex w-[277px] shrink-0 flex-col border-r border-l border-r-[#828282] border-l-[#c0c0c0] bg-[#f7f7f7] pr-0.5 text-black">
      <div className="h-[5px] border-t border-b border-t-[#9fb9c0] border-b-[#c0c0c0]" />
      <div className="flex h-5 items-center justify-center border-b border-[#c0c0c0]">
        <span className="h-1.5 w-1.5 rounded-full border border-[#999] bg-[#d5d5d5]" />
      </div>
      <div className="mt-1 flex h-[26px] border-t border-[#828282]">
        <button aria-label="FeatureManager" className="flex w-10 items-center justify-center"><Icon name="part" /></button>
        {["properties", "config", "target", "ballDark"].map((name) => (
          <button key={name} aria-label={name} className="flex w-10 items-center justify-center border-b border-l border-[#828282] bg-[#d5d5d5]">
            <Icon name={name} />
          </button>
        ))}
        <button aria-label="CAM" className="flex flex-1 items-center justify-end border-b border-l border-[#828282] bg-[#d5d5d5]"><Icon name="cam" /></button>
        <button aria-label="Scroll tabs left" className="flex w-6 items-center justify-center border border-[#c0c0c0]">
          <svg viewBox="0 0 4 8" className="h-2 w-1"><path d="M4 0v8L0 4z" /></svg>
        </button>
        <button aria-label="Scroll tabs right" className="flex w-5 items-center justify-center border-y border-[#c0c0c0]">
          <svg viewBox="0 0 4 8" className="h-2 w-1"><path d="M0 0v8l4-4z" /></svg>
        </button>
      </div>
      <label className="mr-[3px] ml-1 flex h-8 items-center border border-[#c0c0c0] pl-0.5">
        <Icon name="filter" />
        <input aria-label="Filter tree" value={filter} onChange={(e) => setFilter(e.target.value)} className="w-0 flex-1 bg-transparent pl-1 outline-none" />
      </label>
      <div className="flex h-6 items-center gap-1 overflow-hidden pl-1 whitespace-pre">
        <Icon name="part" />
        {"thomas model  (Default<<Default>_D"}
      </div>
      <ul>
        {tree.map((node) => (
          <li key={node.label} className="flex h-6 items-center gap-[5px]">
            <span className="flex w-[21px] justify-center pb-0.5">
              {node.open && (
                <svg viewBox="0 0 4 8" className="h-2 w-1"><path d="M0 0v8l4-4z" fill="#555" /></svg>
              )}
            </span>
            <Icon name={node.icon} />
            {node.label}
          </li>
        ))}
      </ul>
      <div className="h-1 shrink-0 bg-[#3a8cc4]" />
      <div className="mt-auto mb-[3px] h-[22px] border-t border-b border-t-white border-b-[#c0c0c0] bg-[#f0f0f0] pt-[7px] pl-[21px]">
        <div className="h-1.5 w-[164px] bg-[#878787]" />
      </div>
      <button aria-label="Collapse panel" className="absolute top-[376px] -right-3 flex h-[49px] w-3 items-center justify-center border border-l-0 border-[#828282] bg-[#f7f7f7]">
        <span className="h-1.5 w-1.5 rounded-full border border-[#999] bg-[#d5d5d5]" />
      </button>
    </aside>
  );
}

function Cube() {
  return (
    <svg viewBox="0 0 609 704" className="h-[704px] w-[609px] overflow-visible" stroke="#111" strokeWidth="1.300" strokeLinejoin="round" role="img" aria-label="Cube with two holes">
      <defs>
        <linearGradient id="holeTop">
          <stop offset="0" stopColor="#8a8fa2" />
          <stop offset=".3" stopColor="#9ba0b6" />
          <stop offset=".6" stopColor="#888c9f" />
          <stop offset="1" stopColor="#3f4049" />
        </linearGradient>
        <linearGradient id="holeFront" x1=".2" y1="0" x2=".6" y2="1">
          <stop offset="0" stopColor="#6a6b78" />
          <stop offset=".2" stopColor="#b4b9d1" />
          <stop offset=".42" stopColor="#dde3ff" />
          <stop offset=".7" stopColor="#f6fbff" />
          <stop offset="1" stopColor="#ccd2ec" />
        </linearGradient>
        <clipPath id="frontClip">
          <ellipse cx="42" cy="504" rx="43" ry="25" transform="rotate(60 42 504)" />
        </clipPath>
      </defs>
      <path d="M304 0 609 176 304 352 0 176z" fill="#dde4ff" />
      <path d="M0 176 304 352V704L0 528z" fill="#5f6272" />
      <path d="M609 176 304 352V704L609 528z" fill="#949aaf" />
      <ellipse cx="524" cy="176" rx="43" ry="25" fill="url(#holeTop)" />
      <rect x="8" y="460" width="68" height="88" fill="url(#holeFront)" clipPath="url(#frontClip)" stroke="none" />
      <ellipse cx="42" cy="504" rx="43" ry="25" transform="rotate(60 42 504)" fill="none" />
    </svg>
  );
}

function Triad() {
  return (
    <svg viewBox="-5 -6 84 76" className="h-[76px] w-[84px] font-['Open_Sans'] text-[13px]" role="img" aria-label="Axis triad">
      <path d="M36 42V22" stroke="#1c6b1c" strokeWidth="5" />
      <path d="M36 12 30 23q6 4 12 0z" fill="#2c962c" stroke="#125012" strokeWidth=".7" />
      <path d="m36 42-17 10" stroke="#1c1cb8" strokeWidth="4" />
      <path d="m9 58 7-10 5 9z" fill="#3434e6" stroke="#0d0d7a" strokeWidth=".7" />
      <path d="m36 42 17 10" stroke="#b81c1c" strokeWidth="4" />
      <path d="m63 58-7-10-5 9z" fill="#e63434" stroke="#7a0d0d" strokeWidth=".7" />
      <text x="32" y="10" fill="#128a12">Y</text>
      <text x="1" y="64" fill="#1010e0">Z</text>
      <text x="61" y="64" fill="#e81010">X</text>
    </svg>
  );
}

function Viewport() {
  return (
    <main className="relative flex flex-1 items-start justify-center overflow-hidden bg-white pt-[55px] pr-0.5">
      <Cube />
      <div className="absolute bottom-px left-3 flex flex-col text-[#1a1a1a]">
        <span className="mb-5"><Triad /></span>
        <span className="font-[Lato] text-lg leading-5 font-bold">*Isometric</span>
      </div>
      <nav className="absolute top-[54px] right-0 flex flex-col border-t border-l-2 border-[#828282] bg-[#d5d5d5]">
        {["home", "books", "folder", "palette", "ball", "properties", "chat"].map((name, i) => (
          <button key={name} aria-label={name} className={`flex h-[30px] w-[30px] items-center justify-center border-b border-[#828282] ${i === 0 ? "bg-[#f7f7f7]" : ""}`}>
            <Icon name={name} />
          </button>
        ))}
      </nav>
    </main>
  );
}

function SheetTabs() {
  return (
    <div className="flex h-[21px] shrink-0 border-y border-[#828282] bg-[#f7f7f7] pl-[27px] text-[15px] leading-[18px] text-[#1a1a1a]">
      {["M5 3v8M12 3v8L7 7z", "M10 3v8L5 7z", "M5 3v8l5-4z", "M10 3v8M3 3v8l5-4z"].map((d) => (
        <button key={d} aria-label="Scroll sheets" className="flex w-5 items-center justify-center border border-[#8d90a3] bg-[#a8abbe]">
          <svg viewBox="0 0 14 14" className="h-3.5 w-3.5" aria-hidden="true">
            <path d={d} fill="#85879b" stroke="#85879b" />
          </svg>
        </button>
      ))}
      <button className="w-[76px] pb-0.5 pl-1 font-bold text-black">Model</button>
      <button className="w-[89px] border-l border-[#828282] bg-[#d5d5d5] pb-0.5">3D Views</button>
      <button className="w-[145px] border-x border-[#828282] bg-[#d5d5d5] pr-3 pb-0.5">Motion Study 1</button>
    </div>
  );
}

function StatusBar() {
  return (
    <footer className="flex h-[22px] shrink-0 items-end bg-[#e5e5e5] pr-0.5 pl-px leading-[18px] text-black">
      <span>SOLIDWORKS Premium 2020 SP0.0</span>
      <span className="mr-[29px] ml-auto">Editing Part</span>
      <Icon name="rebuild" className="mb-0.5 h-4 w-4" />
      <button className="mr-[27px] ml-20 flex items-center gap-[25px]">
        MMGS
        <Caret className="rotate-180 text-[#444]" />
      </button>
      <Icon name="tag" />
    </footer>
  );
}

export default function App() {
  return (
    <div className="flex h-screen flex-col overflow-hidden bg-white font-['Open_Sans',sans-serif] text-[14px]">
      <TitleBar />
      <Ribbon />
      <TabRow />
      <div className="flex min-h-0 flex-1">
        <FeaturePanel />
        <Viewport />
      </div>
      <SheetTabs />
      <StatusBar />
    </div>
  );
}
